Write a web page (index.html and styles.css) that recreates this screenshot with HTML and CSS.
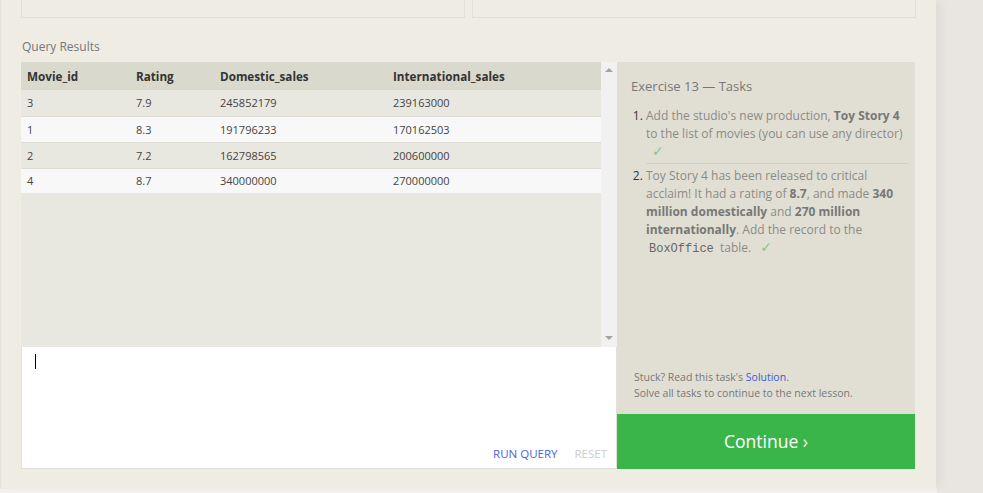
FILE: index.html
```html
<!DOCTYPE html>
<html>
<head>
<meta charset="utf-8">
<link rel="stylesheet" href="styles.css">
</head>
<body>
<div class="page">
  <div class="top-boxes">
    <div class="top-box"></div>
    <div class="top-box"></div>
  </div>
  <div class="label">Query Results</div>
  <div class="workspace">
    <div class="left">
      <div class="results">
        <div class="table-wrap">
          <table class="grid">
            <colgroup>
              <col class="c1"><col class="c2"><col class="c3"><col class="c4">
            </colgroup>
            <thead>
              <tr><th>Movie_id</th><th>Rating</th><th>Domestic_sales</th><th>International_sales</th></tr>
            </thead>
            <tbody>
              <tr class="odd"><td>3</td><td>7.9</td><td>245852179</td><td>239163000</td></tr>
              <tr class="even"><td>1</td><td>8.3</td><td>191796233</td><td>170162503</td></tr>
              <tr class="odd"><td>2</td><td>7.2</td><td>162798565</td><td>200600000</td></tr>
              <tr class="even"><td>4</td><td>8.7</td><td>340000000</td><td>270000000</td></tr>
            </tbody>
          </table>
        </div>
        <div class="scrollbar">
          <span class="arrow up"></span>
          <span class="arrow down"></span>
        </div>
      </div>
      <div class="editor">
        <span class="caret"></span>
        <div class="actions">
          <span class="run">RUN QUERY</span>
          <span class="reset">RESET</span>
        </div>
      </div>
    </div>
    <div class="right">
      <div class="tasks">
        <div class="tasks-title">Exercise 13 — Tasks</div>
        <ol class="task-list">
          <li class="task">Add the studio's new production, <b>Toy Story 4</b> to the list of movies (you can use any director) <span class="check">✓</span></li>
          <li class="task">Toy Story 4 has been released to critical acclaim! It had a rating of <b>8.7</b>, and made <b>340 million domestically</b> and <b>270 million internationally</b>. Add the record to the <code>BoxOffice</code> table. <span class="check">✓</span></li>
        </ol>
        <div class="help">
          <p>Stuck? Read this task's <span class="link">Solution</span>.</p>
          <p>Solve all tasks to continue to the next lesson.</p>
        </div>
      </div>
      <div class="continue">Continue ›</div>
    </div>
  </div>
</div>
<div class="footer-strip"></div>
</body>
</html>
```
FILE: styles.css
```css
html, body {
  margin: 0;
  padding: 0;
}
body {
  width: 983px;
  height: 493px;
  overflow: hidden;
  background: #e9e5e1;
  font-family: "Open Sans", "DejaVu Sans", sans-serif;
  color: #555;
}
.page {
  width: 936px;
  height: 489px;
  background: #efece4;
  border-left: 1px solid #e6e3dc;
  box-shadow: 6px 0 10px -2px rgba(0, 0, 0, 0.05);
  padding-left: 20px;
  box-sizing: border-box;
  position: relative;
}
.footer-strip {
  width: 937px;
  height: 4px;
  background: #f4f2ee;
}
.top-boxes {
  display: flex;
  gap: 7px;
  width: 895px;
}
.top-box {
  flex: 1;
  height: 17px;
  border: 1px solid #e2dfd7;
  border-top: none;
}
.label {
  font-size: 12px;
  color: #777;
  line-height: 17px;
  margin-top: 20px;
  margin-left: 1px;
  height: 24px;
}
.workspace {
  display: flex;
  width: 894px;
  height: 407px;
}
.left {
  width: 596px;
  display: flex;
  flex-direction: column;
}
.results {
  height: 285px;
  display: flex;
  background: #e9e8e0;
}
.table-wrap {
  width: 580px;
}
.grid {
  width: 580px;
  border-collapse: collapse;
  table-layout: fixed;
}
.c1 { width: 109px; }
.c2 { width: 84px; }
.c3 { width: 173px; }
.c4 { width: 214px; }
.grid th {
  background: #dad9cd;
  height: 28px;
  text-align: left;
  font-size: 11.7px;
  font-weight: 700;
  color: #333;
  padding: 0 6px;
  box-sizing: border-box;
}
.grid td {
  height: 26px;
  font-size: 11px;
  color: #444;
  padding: 0 6px;
  border-bottom: 1px solid #dedcd4;
  box-sizing: border-box;
}
.grid tr.odd td { background: #e9e8e0; }
.grid tr.even td { background: #f8f8f8; }
.grid tbody tr:last-child td { height: 25px; border-bottom: none; }
.scrollbar {
  width: 16px;
  background: #f1f1f1;
  position: relative;
}
.arrow {
  position: absolute;
  left: 4px;
  width: 0;
  height: 0;
  border-left: 4px solid transparent;
  border-right: 4px solid transparent;
}
.arrow.up {
  top: 6px;
  border-bottom: 4px solid #a3a3a3;
}
.arrow.down {
  bottom: 7px;
  border-top: 4px solid #a3a3a3;
}
.editor {
  flex: 1;
  background: #fff;
  border: 1px solid #e3e0d8;
  border-top: none;
  position: relative;
  display: flex;
  flex-direction: column;
  justify-content: flex-end;
}
.caret {
  position: absolute;
  left: 13px;
  top: 7px;
  width: 1px;
  height: 15px;
  background: #000;
}
.actions {
  display: flex;
  justify-content: flex-end;
  gap: 17px;
  padding: 0 9px 6px 0;
  font-size: 11.5px;
  line-height: 16px;
}
.run { color: #4a5fe0; }
.reset { color: #cccccc; }
.right {
  width: 298px;
  display: flex;
  flex-direction: column;
}
.tasks {
  flex: 1;
  background: #e1dfd4;
  padding: 15px 7px 0 14px;
  display: flex;
  flex-direction: column;
}
.tasks-title {
  font-size: 13px;
  color: #777;
  line-height: 18px;
}
.task-list {
  margin: 12px 0 0 0;
  padding: 0 0 0 15px;
}
.task {
  font-size: 12px;
  line-height: 18px;
  color: #8b8b87;
  padding: 0 0 2px 0;
}
.task::marker {
  color: #333;
}
.task + .task {
  border-top: 1px solid #d3d1c7;
  padding-top: 3px;
}
.task b {
  color: #777;
  font-weight: 700;
}
.task code {
  font-family: "Liberation Mono", monospace;
  font-size: 12px;
  font-weight: 400;
  color: #666;
  padding: 0 3px;
  line-height: 1;
}
.check {
  color: #7fcb8b;
  margin-left: 6px;
  font-size: 14px;
  line-height: 1;
}
.help {
  margin-top: auto;
  padding: 0 0 13px 3px;
  font-size: 10.5px;
  line-height: 16px;
  color: #777;
}
.help p {
  margin: 0;
}
.link { color: #3b5bdb; }
.continue {
  height: 55px;
  background: #3ab54a;
  color: #fff;
  font-size: 17.5px;
  display: flex;
  align-items: center;
  justify-content: center;
  padding-bottom: 1px;
  box-sizing: border-box;
}
```
